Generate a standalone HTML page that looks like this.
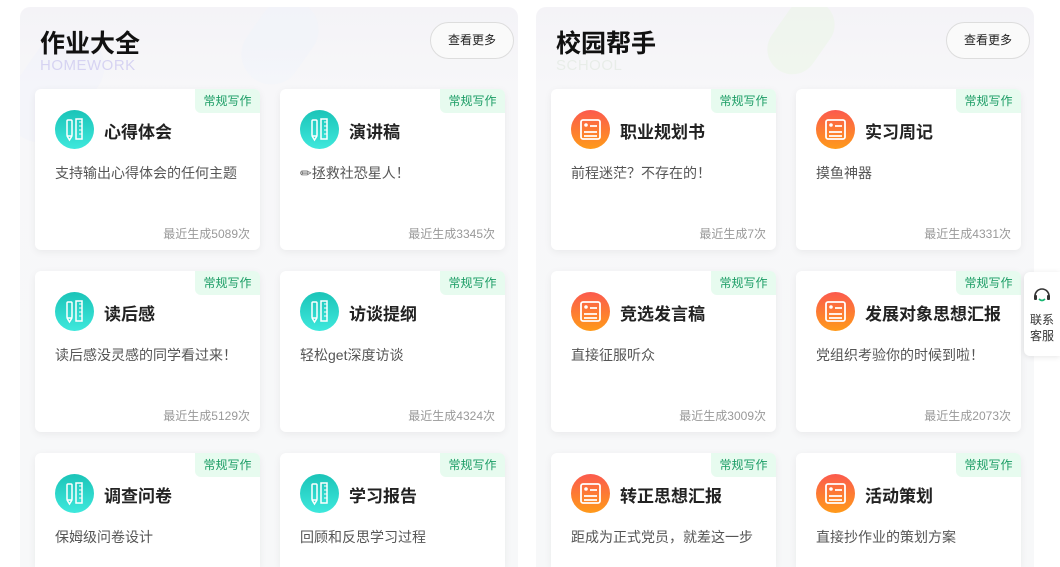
<!DOCTYPE html>
<html style="width:1060px;height:567px;overflow:hidden"><head><meta charset="utf-8"><style>
*{margin:0;padding:0;box-sizing:border-box}
body{width:1060px;height:567px;overflow:hidden;background:#fff;font-family:"Liberation Sans","Noto Sans CJK SC",sans-serif;position:relative}
.panel{position:absolute;top:7px;width:498px;height:560px;border-radius:10px 10px 0 0;background:linear-gradient(180deg,#f4f3f7 0,#f7f7f9 80px,#f7f8f9 100%);overflow:hidden}
.blob{position:absolute;border-radius:40px;transform:rotate(35deg);opacity:.35}
.ptitle{position:absolute;left:20px;top:17px;font-size:25px;font-weight:bold;color:#111}
.psub{position:absolute;left:20px;top:50px;font-size:15px;color:#d6d3f2;letter-spacing:.5px}
.more{position:absolute;left:410px;top:15px;width:84px;height:37px;border:1px solid #ddd;border-radius:19px;background:#fafafa;font-size:12px;text-align:center;line-height:35px;color:#222}
.card{position:absolute;width:225px;height:161px;background:#fff;border-radius:6px;box-shadow:0 2px 8px rgba(0,0,0,.06)}
.last{height:114px;border-radius:6px 6px 0 0}
.tag{position:absolute;right:0;top:0;width:65px;height:24px;background:#e7fbef;border-radius:0 6px 0 6px;color:#1a9c64;font-size:12px;text-align:center;line-height:24px}
.ic{position:absolute;left:20px;top:21px;width:39px;height:39px;border-radius:50%}
.g{background:linear-gradient(180deg,#1bc4b8,#3ee8dc)}
.o{background:linear-gradient(180deg,#fb5a4e,#ff9a1a)}
.ttl{position:absolute;left:69px;top:29px;font-size:17px;font-weight:bold;color:#222}
.desc{position:absolute;left:20px;top:74px;font-size:14px;color:#555}
.cnt{position:absolute;right:10px;top:136px;font-size:12px;color:#999}
.side{position:absolute;left:1024px;top:272px;width:36px;height:84px;background:#fff;border-radius:6px 0 0 6px;box-shadow:0 1px 6px rgba(0,0,0,.1);font-size:12px;color:#333;text-align:center;line-height:16px;padding-top:40px}
</style></head><body>
<div class="panel" style="left:20px">
<div class="blob" style="left:0;top:20px;width:70px;height:120px;background:#eef0fd"></div>
<div class="blob" style="left:230px;top:-10px;width:60px;height:90px;background:#eef3fb"></div>
<div class="ptitle">作业大全</div><div class="psub">HOMEWORK</div><div class="more">查看更多</div>
</div>
<div class="panel" style="left:536px">
<div class="blob" style="left:240px;top:-10px;width:50px;height:80px;background:#e6f6dc"></div>
<div class="ptitle">校园帮手</div><div class="psub" style="color:#e8ede8">SCHOOL</div><div class="more">查看更多</div>
</div>
<svg width="0" height="0" style="position:absolute"><defs>
<g id="ruler"><rect x="12" y="10" width="5" height="16" rx="1" fill="none" stroke="#fff" stroke-width="1.5"/><path d="M12 26 L14.5 30 L17 26" fill="none" stroke="#fff" stroke-width="1.5"/><rect x="21" y="9" width="6" height="20" fill="none" stroke="#fff" stroke-width="1.5"/><path d="M24 12h3M24 16h3M24 20h3M24 24h3" stroke="#fff" stroke-width="1"/></g>
<g id="doc"><rect x="10" y="10" width="19" height="19" rx="2" fill="none" stroke="#fff" stroke-width="1.8"/><circle cx="15" cy="15" r="1.8" fill="#fff"/><path d="M13 22h13M13 26h13M19 16h7" stroke="#fff" stroke-width="1.8"/></g>
</defs></svg>
<div class="card" style="left:35px;top:89px"><div class="tag">常规写作</div><div class="ic g"><svg width="39" height="39"><use href="#ruler"/></svg></div><div class="ttl">心得体会</div><div class="desc">支持输出心得体会的任何主题</div><div class="cnt">最近生成5089次</div></div>
<div class="card" style="left:280px;top:89px"><div class="tag">常规写作</div><div class="ic g"><svg width="39" height="39"><use href="#ruler"/></svg></div><div class="ttl">演讲稿</div><div class="desc">✏拯救社恐星人！</div><div class="cnt">最近生成3345次</div></div>
<div class="card" style="left:551px;top:89px"><div class="tag">常规写作</div><div class="ic o"><svg width="39" height="39"><use href="#doc"/></svg></div><div class="ttl">职业规划书</div><div class="desc">前程迷茫？不存在的！</div><div class="cnt">最近生成7次</div></div>
<div class="card" style="left:796px;top:89px"><div class="tag">常规写作</div><div class="ic o"><svg width="39" height="39"><use href="#doc"/></svg></div><div class="ttl">实习周记</div><div class="desc">摸鱼神器</div><div class="cnt">最近生成4331次</div></div>

<div class="card" style="left:35px;top:271px"><div class="tag">常规写作</div><div class="ic g"><svg width="39" height="39"><use href="#ruler"/></svg></div><div class="ttl">读后感</div><div class="desc">读后感没灵感的同学看过来！</div><div class="cnt">最近生成5129次</div></div>
<div class="card" style="left:280px;top:271px"><div class="tag">常规写作</div><div class="ic g"><svg width="39" height="39"><use href="#ruler"/></svg></div><div class="ttl">访谈提纲</div><div class="desc">轻松get深度访谈</div><div class="cnt">最近生成4324次</div></div>
<div class="card" style="left:551px;top:271px"><div class="tag">常规写作</div><div class="ic o"><svg width="39" height="39"><use href="#doc"/></svg></div><div class="ttl">竞选发言稿</div><div class="desc">直接征服听众</div><div class="cnt">最近生成3009次</div></div>
<div class="card" style="left:796px;top:271px"><div class="tag">常规写作</div><div class="ic o"><svg width="39" height="39"><use href="#doc"/></svg></div><div class="ttl">发展对象思想汇报</div><div class="desc">党组织考验你的时候到啦！</div><div class="cnt">最近生成2073次</div></div>

<div class="card last" style="left:35px;top:453px"><div class="tag">常规写作</div><div class="ic g"><svg width="39" height="39"><use href="#ruler"/></svg></div><div class="ttl">调查问卷</div><div class="desc">保姆级问卷设计</div></div>
<div class="card last" style="left:280px;top:453px"><div class="tag">常规写作</div><div class="ic g"><svg width="39" height="39"><use href="#ruler"/></svg></div><div class="ttl">学习报告</div><div class="desc">回顾和反思学习过程</div></div>
<div class="card last" style="left:551px;top:453px"><div class="tag">常规写作</div><div class="ic o"><svg width="39" height="39"><use href="#doc"/></svg></div><div class="ttl">转正思想汇报</div><div class="desc">距成为正式党员，就差这一步</div></div>
<div class="card last" style="left:796px;top:453px"><div class="tag">常规写作</div><div class="ic o"><svg width="39" height="39"><use href="#doc"/></svg></div><div class="ttl">活动策划</div><div class="desc">直接抄作业的策划方案</div></div>

<div class="side"><svg style="position:absolute;left:7px;top:12px" width="22" height="22" viewBox="0 0 22 22"><path d="M4 12 A7 7 0 0 1 18 12" fill="none" stroke="#333" stroke-width="1.6"/><rect x="3" y="11" width="3" height="5" rx="1" fill="#333"/><rect x="16" y="11" width="3" height="5" rx="1" fill="#333"/><path d="M8 15 Q11 18 14 15" fill="none" stroke="#1bb673" stroke-width="1.6"/></svg>联系<br>客服</div>
</body></html>
